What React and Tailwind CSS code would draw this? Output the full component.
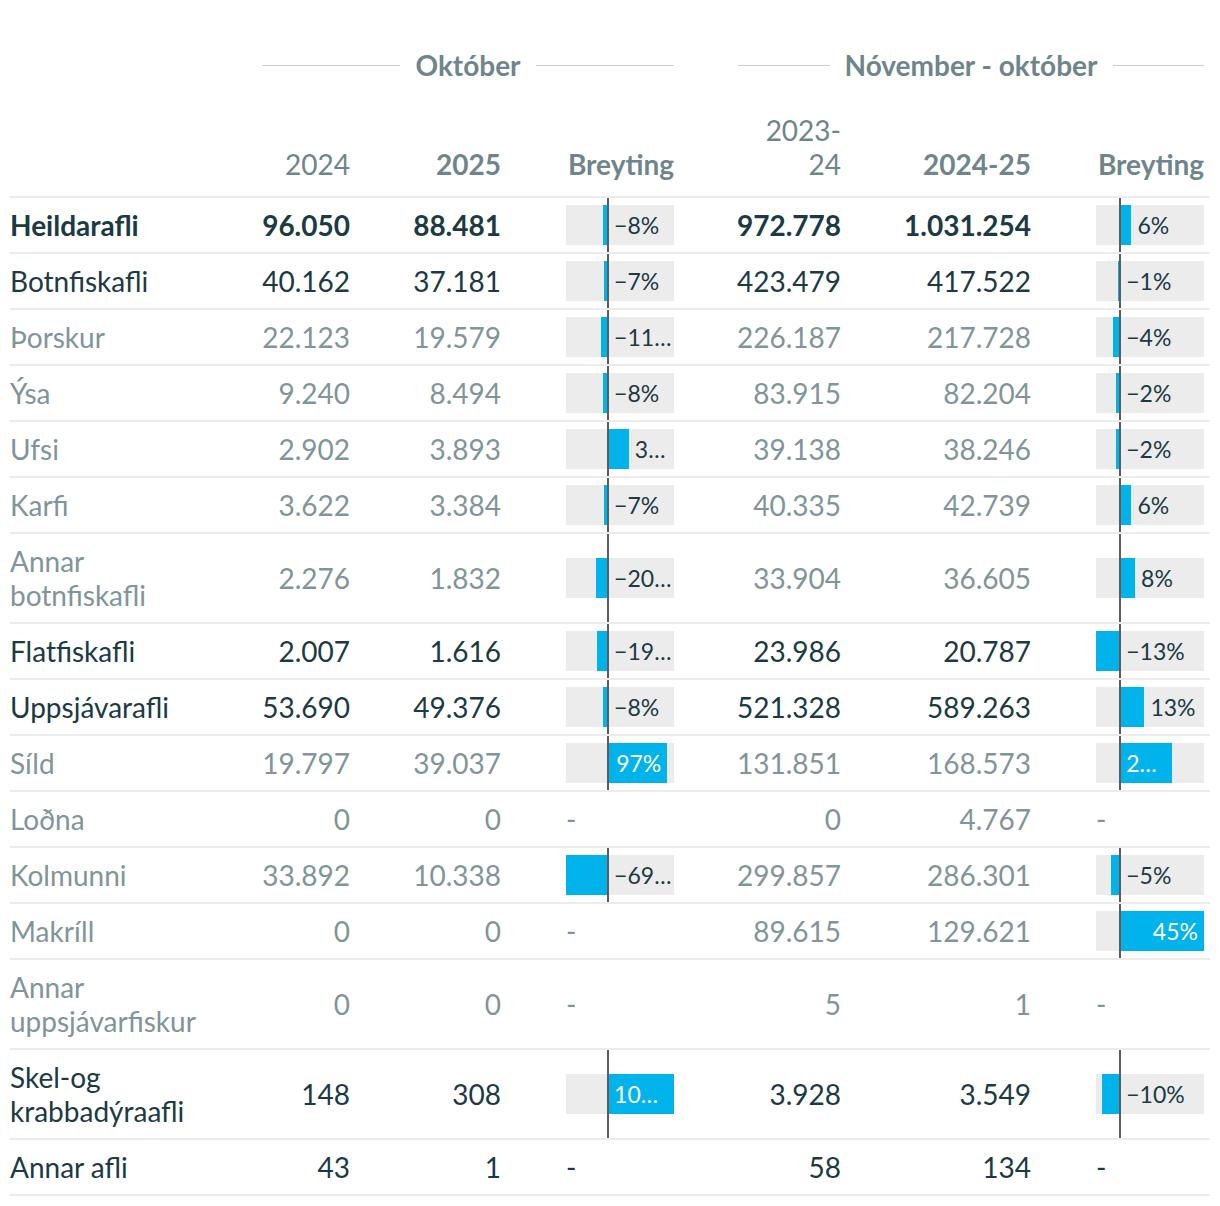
import React from 'react'

// Tafla: afli eftir tegundum, október og nóvember - október
const DARK = 'text-[#1b3a44]'
const GRAY = 'text-[#7f9599]'

const rows = [
  { name: 'Heildarafli', bold: true, dark: true, v: ['96.050', '88.481', '972.778', '1.031.254'], p: [-8, 6] },
  { name: 'Botnfiskafli', dark: true, v: ['40.162', '37.181', '423.479', '417.522'], p: [-7, -1] },
  { name: 'Þorskur', v: ['22.123', '19.579', '226.187', '217.728'], p: [-11, -4] },
  { name: 'Ýsa', v: ['9.240', '8.494', '83.915', '82.204'], p: [-8, -2] },
  { name: 'Ufsi', v: ['2.902', '3.893', '39.138', '38.246'], p: [34, -2] },
  { name: 'Karfi', v: ['3.622', '3.384', '40.335', '42.739'], p: [-7, 6] },
  { name: 'Annar botnfiskafli', v: ['2.276', '1.832', '33.904', '36.605'], p: [-20, 8] },
  { name: 'Flatfiskafli', dark: true, v: ['2.007', '1.616', '23.986', '20.787'], p: [-19, -13] },
  { name: 'Uppsjávarafli', dark: true, v: ['53.690', '49.376', '521.328', '589.263'], p: [-8, 13] },
  { name: 'Síld', v: ['19.797', '39.037', '131.851', '168.573'], p: [97, 28] },
  { name: 'Loðna', v: ['0', '0', '0', '4.767'], p: [null, null] },
  { name: 'Kolmunni', v: ['33.892', '10.338', '299.857', '286.301'], p: [-69, -5] },
  { name: 'Makríll', v: ['0', '0', '89.615', '129.621'], p: [null, 45] },
  { name: 'Annar uppsjávarfiskur', v: ['0', '0', '5', '1'], p: [null, null] },
  { name: 'Skel-og krabbadýraafli', dark: true, v: ['148', '308', '3.928', '3.549'], p: [108, -10] },
  { name: 'Annar afli', dark: true, v: ['43', '1', '58', '134'], p: [null, null] },
]

const DOMAINS = [
  [-69, 108],
  [-13, 45],
]

const COLS = 'grid grid-cols-[200px_140px_151px_173px_167px_190px_173px_6px]'

function fmt(p) {
  return (p < 0 ? '\u2212' : '') + Math.abs(p) + '%'
}

function BarCell({ pct, domain, color }) {
  if (pct == null) {
    return (
      <div className={`flex items-center pl-[65px] font-normal py-[10px] leading-[34px] ${color}`}>-</div>
    )
  }
  const W = 108
  const [min, max] = domain
  const scale = W / (max - min)
  const zero = -min * scale
  const len = Math.abs(pct) * scale
  const left = pct < 0 ? zero - len : zero
  const inside = pct > 0 && len >= 40

  // merki: inni í súlu (hvítt) eða hægra megin við núll / súluenda
  let labelStyle
  if (inside) labelStyle = { left: zero + 6, width: len - 12 }
  else if (pct < 0) labelStyle = { left: zero + 6, width: W - zero - 8.5 }
  else labelStyle = { left: zero + len + 6, width: W - zero - len - 8 }

  return (
    <div className="relative flex items-center justify-end">
      <div className="relative w-[108px] h-[40px] bg-[#ececec]">
        <div className="absolute top-0 bottom-0 bg-[#00b3ea]" style={{ left, width: len }} />
        <div
          className={`absolute top-0 bottom-0 leading-[40px] text-[23px] font-normal whitespace-nowrap overflow-hidden text-ellipsis ${
            inside ? 'text-white text-right' : 'text-[#1b3a44]'
          }`}
          style={labelStyle}
        >
          {fmt(pct)}
        </div>
      </div>
      <div className="absolute top-0 bottom-0 w-[2px] bg-[#5c5c5c]" style={{ left: 65 + zero - 1 }} />
    </div>
  )
}

function Num({ children }) {
  return <div className="flex items-center justify-end py-[10px] leading-[34px]">{children}</div>
}

function GroupHead({ title }) {
  return (
    <div className="flex items-center gap-[15px]">
      <div className="flex-1 h-px bg-[#c9cfd1]" />
      <span className="font-bold">{title}</span>
      <div className="flex-1 h-px bg-[#c9cfd1]" />
    </div>
  )
}

export default function App() {
  return (
    <div className="bg-white min-h-[1206px] font-['Lato','Noto_Sans',sans-serif] text-[28px]">
      <div className="ml-[10px] w-[1200px]">
        {/* Yfirfyrirsagnir */}
        <div className="grid grid-cols-[252px_412px_64px_466px] pt-[48px] leading-[34px] text-[#6e858b]">
          <div />
          <GroupHead title="Október" />
          <div />
          <GroupHead title="Nóvember - október" />
        </div>

        {/* Dálkafyrirsagnir */}
        <div className={`${COLS} items-end pt-[31px] pb-[15px] leading-[34px] text-[#6e858b] border-b-2 border-[#ececec]`}>
          <div />
          <div className="text-right">2024</div>
          <div className="text-right font-bold">2025</div>
          <div className="text-right font-bold">Breyting</div>
          <div className="text-right">
            <span className="inline-block w-[80px]">2023-24</span>
          </div>
          <div className="text-right font-bold">2024-25</div>
          <div className="text-right font-bold">Breyting</div>
          <div />
        </div>

        {rows.map((r) => {
          const color = r.dark ? DARK : GRAY
          return (
            <div key={r.name} className={`${COLS} border-b-2 border-[#ececec] ${color} ${r.bold ? 'font-bold' : ''}`}>
              <div className="py-[10px] leading-[34px] pr-[10px]">{r.name}</div>
              <Num>{r.v[0]}</Num>
              <Num>{r.v[1]}</Num>
              <BarCell pct={r.p[0]} domain={DOMAINS[0]} color={color} />
              <Num>{r.v[2]}</Num>
              <Num>{r.v[3]}</Num>
              <BarCell pct={r.p[1]} domain={DOMAINS[1]} color={color} />
              <div />
            </div>
          )
        })}
      </div>
    </div>
  )
}
